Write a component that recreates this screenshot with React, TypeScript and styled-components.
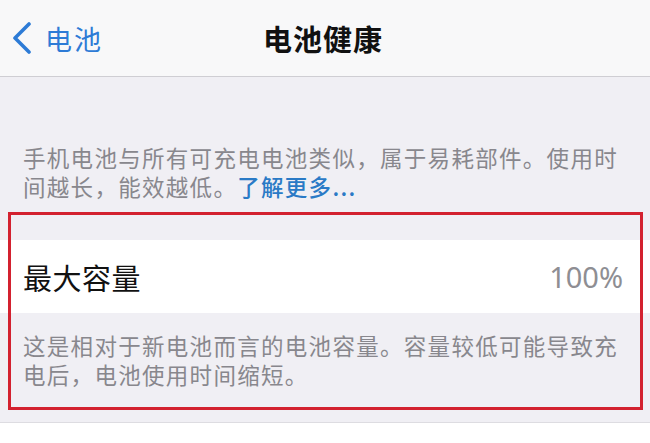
import React from "react";
import styled, { createGlobalStyle } from "styled-components";

const GlobalStyle = createGlobalStyle`
  html, body {
    margin: 0;
    padding: 0;
    background: #f0eff4;
  }
  body {
    font-family: "Noto Sans CJK SC", "Noto Sans", sans-serif;
  }
`;

const Page = styled.div`
  width: 650px;
  height: 443px;
  overflow: hidden;
  background: #f0eff4;
  display: flex;
  flex-direction: column;
`;

const NavBar = styled.header`
  height: 76px;
  flex-shrink: 0;
  background: #f8f8f9;
  border-bottom: 1px solid #cfced3;
  display: grid;
  grid-template-columns: 1fr auto 1fr;
  align-items: center;
`;

const BackButton = styled.div`
  display: flex;
  align-items: center;
  gap: 13px;
  padding-left: 12px;
  color: #2d7bd6;
  font-size: 27px;
  letter-spacing: 2px;
`;

const Title = styled.h1`
  margin: 0;
  font-size: 29px;
  font-weight: 700;
  letter-spacing: 1px;
  color: #111;
  position: relative;
  left: -2px;
`;

const Note = styled.p<{ $top: number; $bottom: number }>`
  margin: 0;
  padding: ${(p) => p.$top}px 20px ${(p) => p.$bottom}px 23px;
  font-size: 22.5px;
  line-height: 29px;
  letter-spacing: 1.3px;
  color: #88878d;
`;

const Link = styled.span`
  color: #2a7ac6;
  font-weight: 500;
`;

const Annotated = styled.section`
  position: relative;
  padding-top: 39px;
  border-bottom: 1px solid #dddce1;

  &::after {
    content: "";
    position: absolute;
    top: 11px;
    bottom: 12px;
    left: 8px;
    right: 7px;
    border: 3px solid #d3212f;
    pointer-events: none;
  }
`;

const Row = styled.div`
  height: 73px;
  background: #fff;
  display: flex;
  align-items: center;
  justify-content: space-between;
  padding: 0 27px 0 23px;
`;

const Label = styled.span`
  font-size: 29px;
  letter-spacing: 0.5px;
  color: #111;
`;

const Value = styled.span`
  font-family: "Noto Sans", "Open Sans", sans-serif;
  font-size: 29px;
  color: #8e8e93;
`;

const Below = styled.div`
  flex: 1;
  background: #fff;
`;

export default function App() {
  return (
    <>
      <GlobalStyle />
      <Page>
        <NavBar>
          <BackButton>
            <svg width="20" height="32" viewBox="0 0 20 32" fill="none">
              <path
                d="M17 2 L3 16 L17 30"
                stroke="#2d7bd6"
                strokeWidth="3.6"
                strokeLinecap="round"
                strokeLinejoin="round"
              />
            </svg>
            电池
          </BackButton>
          <Title>电池健康</Title>
          <div />
        </NavBar>
        <Note $top={66} $bottom={0}>
          手机电池与所有可充电电池类似，属于易耗部件。使用时间越长，能效越低。
          <Link>了解更多...</Link>
        </Note>
        <Annotated>
          <Row>
            <Label>最大容量</Label>
            <Value>100%</Value>
          </Row>
          <Note $top={18} $bottom={33}>
            这是相对于新电池而言的电池容量。容量较低可能导致充电后，电池使用时间缩短。
          </Note>
        </Annotated>
        <Below />
      </Page>
    </>
  );
}
